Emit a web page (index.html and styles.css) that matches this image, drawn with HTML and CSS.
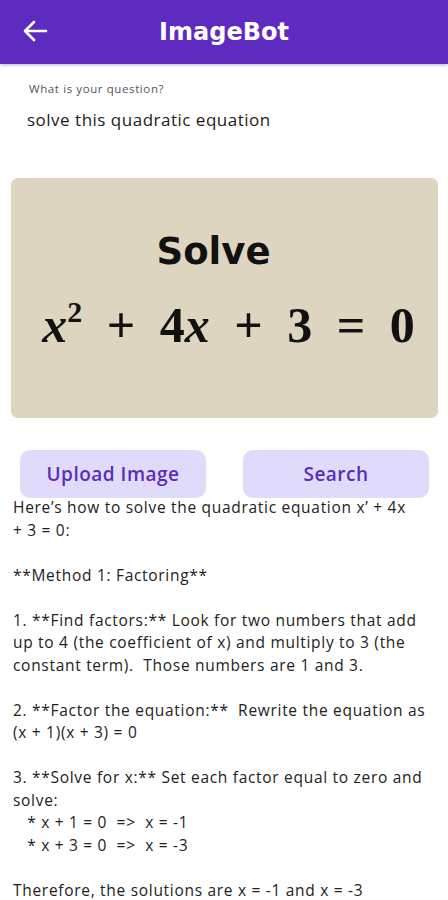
FILE: index.html
```html
<!DOCTYPE html>
<html>
<head>
<meta charset="utf-8">
<link rel="stylesheet" href="styles.css">
</head>
<body>
<header class="appbar">
  <svg class="back" width="26" height="22" viewBox="0 0 26 22"><path d="M24 11H3M12 2L3 11l9 9" fill="none" stroke="#fff" stroke-width="2.6" stroke-linecap="round" stroke-linejoin="round"/></svg>
  <h1 class="title">ImageBot</h1>
</header>
<main class="content">
  <div class="field">
    <div class="label">What is your question?</div>
    <div class="value">solve this quadratic equation</div>
  </div>
  <div class="picture">
    <div class="solve">Solve</div>
    <div class="eq"><i>x</i><sup>2</sup> + 4<i>x</i> + 3 = 0</div>
  </div>
  <div class="buttons">
    <button class="btn">Upload Image</button>
    <button class="btn">Search</button>
  </div>
  <div class="answer">Here’s how to solve the quadratic equation x’ + 4x +&nbsp;3&nbsp;=&nbsp;0:

**Method 1: Factoring**

1. **Find factors:** Look for two numbers that add up to 4 (the coefficient of x) and multiply to 3 (the constant term).  Those numbers are 1 and 3.

2. **Factor the equation:**  Rewrite the equation as (x + 1)(x + 3) = 0

3. **Solve for x:** Set each factor equal to zero and solve:
   * x + 1 = 0  =&gt;  x = -1
   * x + 3 = 0  =&gt;  x = -3

Therefore, the solutions are x = -1 and x = -3</div>
</main>
</body>
</html>
```
FILE: styles.css
```css
* { box-sizing: border-box; }
html, body { margin: 0; padding: 0; background: #fff; }
body { width: 448px; height: 900px; overflow: hidden; font-family: "Open Sans", sans-serif; color: #1d1b20; }
.appbar {
  height: 64px;
  background: #5e2bc1;
  display: flex;
  align-items: center;
  position: relative;
  box-shadow: 0 1px 3px rgba(60,30,120,0.35);
}
.back { position: absolute; left: 22px; top: 20px; }
.title {
  margin: 0 auto;
  color: #fff;
  font-family: "DejaVu Sans", sans-serif;
  font-weight: 700;
  font-size: 24px;
}
.content { display: flex; flex-direction: column; }
.field { padding: 17px 27px 0; height: 96px; }
.label { font-size: 11.5px; color: #555; margin-left: 2px; letter-spacing: 0.6px; }
.value { font-size: 17px; margin-top: 12px; color: #1d1b20; letter-spacing: 0.5px; }
.picture {
  margin: 18px 10px 0 11px;
  height: 240px;
  background: #ddd5c0;
  border-radius: 7px;
  display: flex;
  flex-direction: column;
  align-items: center;
}
.solve {
  font-family: "DejaVu Sans", sans-serif;
  font-weight: bold;
  font-size: 37px;
  margin-top: 52px;
  margin-left: -22px;
  color: #111;
}
.eq {
  font-family: "Liberation Serif", serif;
  font-weight: bold;
  font-size: 50px;
  line-height: 56px;
  margin-top: 24px;
  color: #111;
  word-spacing: 12px;
  margin-left: 8px;
}
.eq sup { font-size: 30px; vertical-align: 20px; line-height: 0; }
.buttons {
  display: flex;
  justify-content: space-between;
  padding: 32px 19px 0 20px;
}
.btn {
  width: 186px;
  height: 48px;
  border: none;
  border-radius: 10px;
  background: #e0dbfa;
  color: #5a2cbd;
  font-family: "Open Sans", sans-serif;
  font-weight: 600;
  font-size: 19px;
  letter-spacing: 0.5px;
}
.answer {
  white-space: pre-wrap;
  padding: 0 16px 0 13px;
  margin-top: -2px;
  font-size: 15.5px;
  line-height: 22.5px;
  letter-spacing: 0.7px;
  color: #222;
}
```
